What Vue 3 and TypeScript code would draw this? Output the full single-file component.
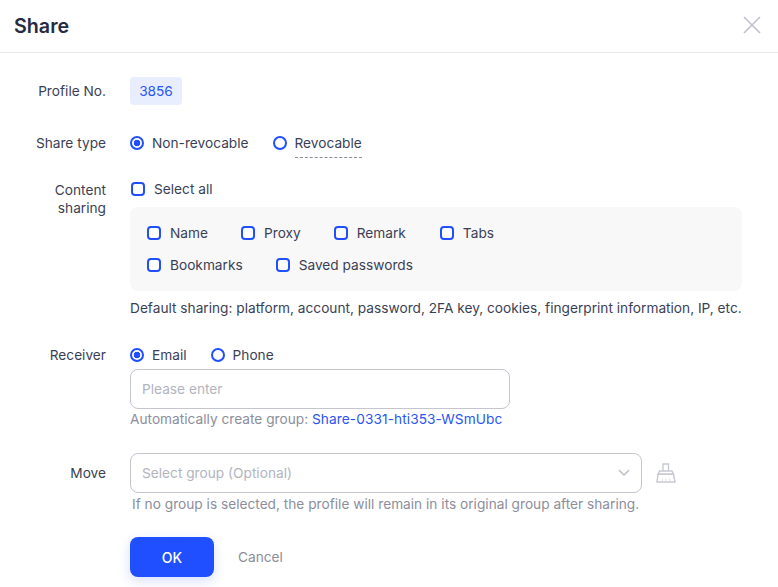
<script setup lang="ts">
const row1 = [
  { label: 'Name', gap: 33 },
  { label: 'Proxy', gap: 33 },
  { label: 'Remark', gap: 34 },
  { label: 'Tabs', gap: 0 },
]
const row2 = [
  { label: 'Bookmarks', gap: 33 },
  { label: 'Saved passwords', gap: 0 },
]
</script>

<template>
  <div class="dialog">
    <header class="head">
      <h1 class="title">Share</h1>
      <button class="close" aria-label="Close">
        <svg width="18" height="18" viewBox="0 0 18 18" fill="none" stroke="#bfc0cb" stroke-width="1.6">
          <path d="M1 1 17 17M17 1 1 17" />
        </svg>
      </button>
    </header>

    <div class="form">
      <div class="row r-profile">
        <div class="label">Profile No.</div>
        <div class="field"><span class="tag">3856</span></div>
      </div>

      <div class="row r-type">
        <div class="label">Share type</div>
        <div class="field inline">
          <label class="opt"><span class="radio on"></span>Non-revocable</label>
          <label class="opt dash-wrap"><span class="radio"></span><span class="dashed">Revocable</span></label>
        </div>
      </div>

      <div class="row r-content">
        <div class="label two">Content<br />sharing</div>
        <div class="field">
          <label class="opt all"><span class="check"></span>Select all</label>
          <div class="box">
            <div class="box-row">
              <label v-for="o in row1" :key="o.label" class="opt small" :style="{ marginRight: o.gap + 'px' }">
                <span class="check"></span>{{ o.label }}
              </label>
            </div>
            <div class="box-row">
              <label v-for="o in row2" :key="o.label" class="opt small" :style="{ marginRight: o.gap + 'px' }">
                <span class="check"></span>{{ o.label }}
              </label>
            </div>
          </div>
          <p class="default">Default sharing: platform, account, password, 2FA key, cookies, fingerprint information, IP, etc.</p>
        </div>
      </div>

      <div class="row r-receiver">
        <div class="label">Receiver</div>
        <div class="field">
          <div class="inline tight">
            <label class="opt"><span class="radio on"></span>Email</label>
            <label class="opt"><span class="radio"></span>Phone</label>
          </div>
          <div class="input w380">Please enter</div>
          <p class="hint">Automatically create group: <span class="link">Share-0331-hti353-WSmUbc</span></p>
        </div>
      </div>

      <div class="row r-move">
        <div class="label tall">Move</div>
        <div class="field">
          <div class="select-line">
            <div class="input w512">
              <span>Select group (Optional)</span>
              <svg width="12" height="8" viewBox="0 0 12 8" fill="none" stroke="#c4c5cf" stroke-width="1.7">
                <path d="M1 1.200 6 6 11 1.200" />
              </svg>
            </div>
            <svg class="broom" width="20" height="20" viewBox="0 0 20 20" fill="none" stroke="#c8c9d2" stroke-width="1.4">
              <path d="M7 8V1h5.500v7" />
              <path d="M3.500 8h12.500l1.500 3.300H2z" />
              <path d="M2 11.300h15.500L19 19H1z" />
              <path d="M6.200 15.500V19M9.800 15.500V19M13.400 15.500V19" stroke="#dcdde3" stroke-width="1" />
            </svg>
          </div>
          <p class="hint after">If no group is selected, the profile will remain in its original group after sharing.</p>
        </div>
      </div>

      <div class="row r-actions">
        <div class="label"></div>
        <div class="field inline actions">
          <button class="ok">OK</button>
          <button class="cancel">Cancel</button>
        </div>
      </div>
    </div>
  </div>
</template>

<style>
body { background: #fff; }
</style>

<style scoped>
.dialog {
  width: 778px;
  height: 587px;
  overflow: hidden;
  background: #fff;
  font-family: Inter, "Liberation Sans", sans-serif;
  font-size: 13.7px;
  color: #3b3f55;
  box-sizing: border-box;
}
.head {
  height: 53px;
  box-sizing: border-box;
  border-bottom: 1px solid #e9e9ec;
  display: flex;
  align-items: center;
  justify-content: space-between;
  padding: 0 17px 0 14px;
}
.title {
  margin: 0;
  font-size: 19.7px;
  font-weight: 600;
  color: #262b43;
}
.close {
  border: 0;
  padding: 0;
  margin-bottom: 2px;
  background: none;
  display: flex;
}
.form {
  padding-top: 24px;
  display: flex;
  flex-direction: column;
}
.row {
  display: flex;
  align-items: flex-start;
}
.label {
  width: 106px;
  margin-right: 24px;
  text-align: right;
  line-height: 28px;
  flex: none;
}
.label.two {
  line-height: 18px;
  padding-top: 6px;
  box-sizing: border-box;
}
.label.tall { line-height: 40px; }
.field { flex: none; }
.inline {
  display: flex;
  align-items: center;
}
.tag {
  display: block;
  width: 52px;
  height: 28px;
  line-height: 28px;
  text-align: center;
  border-radius: 4px;
  background: #e8eefd;
  color: #2a55f5;
  box-sizing: border-box;
}
.r-type { margin-top: 24px; }
.opt {
  display: flex;
  align-items: center;
  line-height: 28px;
  height: 28px;
  color: #3b3f55;
  white-space: nowrap;
}
.radio {
  width: 14px;
  height: 14px;
  box-sizing: border-box;
  border: 2px solid #1f4fff;
  border-radius: 50%;
  margin-right: 8px;
  background: #fff;
  flex: none;
}
.radio.on {
  background: radial-gradient(circle, #1f4fff 0 3px, #fff 3.6px);
}
.r-type .opt + .opt { margin-left: 24px; }
.dash-wrap { position: relative; }
.dashed { position: relative; }
.dashed::after {
  content: "";
  position: absolute;
  left: 0;
  right: 0;
  bottom: -1px;
  border-bottom: 1px dashed #8a8c99;
}
.r-content { margin-top: 18px; }
.check {
  width: 14px;
  height: 14px;
  box-sizing: border-box;
  border: 2px solid #1f4fff;
  border-radius: 4px;
  margin-right: 9px;
  flex: none;
  background: #fff;
}
.all { padding-left: 1px; height: 28px; }
.box {
  width: 612px;
  height: 84px;
  margin-top: 4px;
  box-sizing: border-box;
  background: #f8f8f9;
  border-radius: 8px;
  padding: 12px 17px;
  display: flex;
  flex-direction: column;
  gap: 4px;
}
.box-row {
  display: flex;
}
.default {
  margin: 8px 0 0;
  line-height: 18px;
  white-space: nowrap;
  color: #3b3f55;
}
.r-receiver { margin-top: 24px; }
.tight { gap: 24px; }
.input {
  height: 40px;
  box-sizing: border-box;
  border: 1px solid #c4c5cf;
  border-radius: 8px;
  padding: 0 11px;
  display: flex;
  align-items: center;
  justify-content: space-between;
  color: #b3b4be;
  background: #fff;
}
.w380 { width: 380px; margin-top: 0; }
.w512 { width: 512px; }
.hint {
  margin: 0;
  line-height: 20px;
  color: #8c8e9b;
  white-space: nowrap;
}
.hint.after { padding-left: 2px; margin-top: 1px; }
.link { color: #2a55f5; letter-spacing: 0.08px; }
.r-move { margin-top: 24px; }
.select-line {
  display: flex;
  align-items: center;
}
.broom { margin-left: 14px; }
.r-actions { margin-top: 23px; }
.actions { gap: 24px; }
.ok {
  width: 84px;
  height: 40px;
  border: 0;
  border-radius: 8px;
  background: #1f4fff;
  color: #fff;
  font: 500 14px Inter, sans-serif;
  box-shadow: 0 4px 12px rgba(31, 79, 255, 0.18);
}
.cancel {
  border: 0;
  padding: 0;
  background: none;
  color: #8c8e9b;
  font: 400 13.7px Inter, sans-serif;
}
</style>
